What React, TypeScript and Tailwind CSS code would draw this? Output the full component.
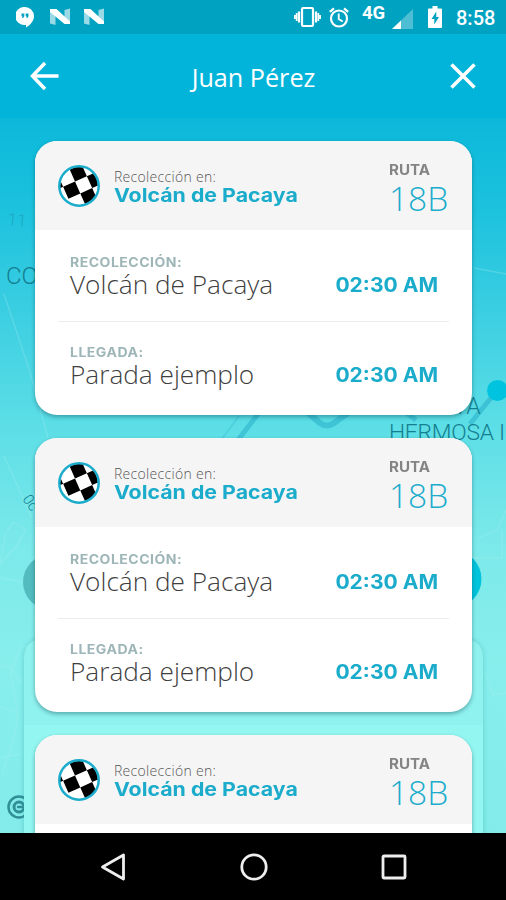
import React from 'react';

const STOPS = [
  { id: 1, place: 'Volcán de Pacaya', route: '18B' },
  { id: 2, place: 'Volcán de Pacaya', route: '18B' },
  { id: 3, place: 'Volcán de Pacaya', route: '18B' },
];

const NougatIcon = () => (
  <svg viewBox="0 0 22 18" className="h-[18px] w-[22px]">
    <path d="M1 2.5l5.5 4V17L1 15.5zM15.5 2l5.5-1.5v15l-5.5-4z" fill="#fff" opacity=".6" />
    <path d="M1 1h6.500L21 13.500V16h-5.500L1 4z" fill="#fff" />
  </svg>
);

const StatusBar = () => (
  <div className="flex h-[34px] shrink-0 items-center bg-[#00a2c1] pr-[11px] pl-[16px]">
    <svg viewBox="0 0 18 21" className="h-[21px] w-[18px]">
      <path d="M9 0a9 9 0 0 1 9 9c0 5.300-4 9-8 11.500V17.800A9 9 0 1 1 9 0z" fill="#fff" />
      <path d="M5.500 6.500h2.800v2.700L7.200 11h-.9V9.200h-.8zM9.700 6.500h2.800v2.700L11.400 11h-.9V9.200h-.8z" fill="#00a2c1" />
    </svg>
    <div className="ml-[15px] flex gap-[12px]">
      <NougatIcon />
      <NougatIcon />
    </div>
    <div className="ml-auto flex items-center">
      <svg viewBox="0 0 27 20" className="h-[20px] w-[27px]" fill="none" stroke="#fff" strokeWidth="2.200">
        <rect x="8" y="1" width="11" height="18" rx="1.500" />
        <path d="M5 4.500v11M22 4.500v11" />
        <path d="M2.700 6v8M24.300 6v8M.8 8v4M26.200 8v4" strokeWidth="1.800" />
      </svg>
      <svg viewBox="0 0 20 21" className="ml-[8px] h-[21px] w-[20px]" fill="none" stroke="#fff" strokeWidth="2.200">
        <circle cx="10" cy="11.500" r="8" />
        <path d="M9.700 6.500v5.500l4 2.500" strokeWidth="1.900" />
        <path d="M.8 4.800l4.200-3.500M19.200 4.800L15 1.300" />
      </svg>
      <span className="mb-[8px] ml-[13px] w-[24px] font-[Roboto] text-[18.5px] leading-[18px] font-bold text-white">4G</span>
      <svg viewBox="0 0 21 20" className="mt-[4px] ml-[6px] h-[20px] w-[21px]">
        <path d="M0 20L21 0v20z" fill="#fff" opacity=".3" />
        <path d="M0 20l9-8.600V20z" fill="#fff" />
      </svg>
      <svg viewBox="0 0 14 22" className="ml-[15px] h-[22px] w-[14px]">
        <path d="M4.500 0h5v2.500H13a1 1 0 0 1 1 1V21a1 1 0 0 1-1 1H1a1 1 0 0 1-1-1V3.500a1 1 0 0 1 1-1h3.500z" fill="#fff" />
        <path d="M8.300 5.500L3.500 13H6.300v5.500L11 11H8.300z" fill="#00a2c1" />
      </svg>
      <span className="ml-[14px] w-[39px] pt-[2px] font-[Roboto] text-[20px] leading-[24px] font-medium whitespace-nowrap text-white">8:58</span>
    </div>
  </div>
);

const TopBar = () => (
  <div className="flex h-[84px] shrink-0 items-center justify-between bg-[#03b4da] pr-[30px] pl-[30px]">
    <svg viewBox="0 0 30 30" className="h-[30px] w-[30px]" fill="none" stroke="#fff" strokeWidth="3.500">
      <path d="M28.500 15H3M15 2L2.500 15 15 28" />
    </svg>
    <h1 className="pt-[1px] pr-[3px] font-['Open_Sans'] text-[25.2px] leading-[34px] text-white">Juan Pérez</h1>
    <svg viewBox="0 0 26 26" className="h-[26px] w-[26px]" fill="none" stroke="#fff" strokeWidth="3.500">
      <path d="M1.500 1.500l23 23M24.500 1.500l-23 23" />
    </svg>
  </div>
);

/* Dimmed route map behind the list */
const MapBackdrop = () => (
  <svg viewBox="0 0 506 715" className="absolute inset-0 h-full w-full">
    <defs>
      <linearGradient id="sea" x1="0" y1="0" x2="0" y2="1">
        <stop offset="0" stopColor="#0cb8da" />
        <stop offset=".12" stopColor="#1bc1dd" />
        <stop offset=".28" stopColor="#3dcfe2" />
        <stop offset=".43" stopColor="#5cdee6" />
        <stop offset=".6" stopColor="#7ce9ea" />
        <stop offset=".75" stopColor="#87eeec" />
        <stop offset="1" stopColor="#83ecea" />
      </linearGradient>
      <filter id="lift" x="-10%" y="-10%" width="120%" height="120%">
        <feDropShadow dx="0" dy="0" stdDeviation="2.500" floodColor="#2a9a9a" floodOpacity=".4" />
      </filter>
    </defs>
    <rect width="506" height="715" fill="url(#sea)" />
    <g fill="none" stroke="#b5f5f2" strokeWidth="1.300" opacity=".25">
      <path d="M4 176l26 78 18 66M4 338l28 62M0 446l18-20 8-14-12-8-8 10zM0 460l22 4 12-26M34 526l-14 4-8 22 10 14M0 547l10 3 8 46-4 24-12 36M0 588l18 8M0 640l20-4" />
      <path d="M474 150l32 6M478 420l20-8 8-20M472 440h30M485 555l8 22 13-2M502 440v-30" />
    </g>
    <g fill="none" stroke="#159fbf" opacity=".4">
      <path d="M221 322l18-24" strokeWidth="2" opacity=".5" />
      <path d="M238 322l20-26" strokeWidth="5" />
      <path d="M308 295l12 10q7 5 14 0l14-10" strokeWidth="6" />
      <path d="M400 290l16 12M470 306l24-30" strokeWidth="5" />
    </g>
    <circle cx="497.500" cy="272.500" r="10.500" fill="#00c3df" />
    <g fill="#147f91" fontFamily="Roboto, sans-serif" fontWeight="300">
      <text x="7" y="107" fontSize="17" opacity=".4" transform="rotate(5 6 107)">11</text>
      <text x="6" y="166" fontSize="24">CO</text>
      <text x="453" y="296" fontSize="23">VA</text>
      <text x="389" y="322" fontSize="22.800" textLength="116">HERMOSA I</text>
      <text x="22" y="381" fontSize="15" transform="rotate(55 22 381)">0c</text>
    </g>
    <circle cx="51" cy="464" r="28" fill="#53bcbf" />
    <circle cx="453" cy="461" r="28.500" fill="#00c3dc" />
    <g fill="none" stroke="#318f96" strokeWidth="2.500">
      <circle cx="19" cy="689" r="10.500" />
      <circle cx="19" cy="689" r="5" strokeWidth="3" />
      <path d="M17 689h9" />
    </g>
    <path d="M24 730V541q0-20 20-20h419q20 0 20 20v189z" fill="#8ff2ee" filter="url(#lift)" />
    <path d="M24 607h459v120H24z" fill="#98f9f3" opacity=".55" />
  </svg>
);

const CheckerBadge = () => (
  <svg viewBox="0 0 42 42" className="h-[42px] w-[42px] shrink-0">
    <defs>
      <clipPath id="badge-clip">
        <circle cx="21" cy="21" r="19" />
      </clipPath>
    </defs>
    <circle cx="21" cy="21" r="19" fill="#fff" />
    <g clipPath="url(#badge-clip)">
      <g transform="translate(17 16.500) rotate(-24)">
        <path d="M-13 0H0v13h-13zM0-13h13V0H0zM0 13h13v13H0zM13 0h13v13H13zM-26-13h13V0h-13z" fill="#000" />
      </g>
    </g>
    <circle cx="21" cy="21" r="19.700" fill="none" stroke="#1baccc" strokeWidth="2.500" />
  </svg>
);

type LegProps = { label: string; value: string; time: string };

const Leg = ({ label, value, time }: LegProps) => (
  <div className="flex h-[91px] items-start justify-between pr-[11px] pl-[12px]">
    <div className="pt-[24px]">
      <p className="origin-left scale-x-[1.08] font-[Inter] text-[13px] leading-[16px] font-bold tracking-[0.45px] text-[#9eb6b8]">{label}</p>
      <p className="font-['Open_Sans'] text-[26.2px] leading-[29px] font-light whitespace-nowrap text-[#3f3f3f]">{value}</p>
    </div>
    <span className="origin-right scale-x-[1.08] pt-[43px] font-[Inter] text-[19.5px] leading-[24px] font-bold whitespace-nowrap text-[#1baccc]">{time}</span>
  </div>
);

const RouteCard = ({ place, route }: { place: string; route: string }) => (
  <div className="h-[274px] shrink-0 overflow-hidden rounded-[22px] bg-white shadow-[0_2px_4px_rgba(0,60,70,0.4)]">
    <div className="flex h-[89px] items-start bg-[#f5f5f5] pr-[24px] pl-[23px]">
      <div className="flex items-center pt-[24px]">
        <CheckerBadge />
        <div className="ml-[14px]">
          <p className="font-['Open_Sans'] text-[14px] leading-[18px] font-light tracking-[0.3px] text-[#555]">Recolección en:</p>
          <p className="origin-left scale-x-[1.135] font-[Inter] text-[18.8px] leading-[19px] font-bold whitespace-nowrap text-[#1baccc]">{place}</p>
        </div>
      </div>
      <div className="ml-auto w-[59px] pt-[20px]">
        <p className="origin-left scale-x-[1.08] font-[Inter] text-[14px] leading-[18px] font-bold text-[#848484]">RUTA</p>
        <p className="font-['Open_Sans'] text-[33.5px] leading-[39px] font-light text-[#1baccc]">{route}</p>
      </div>
    </div>
    <div className="px-[23px]">
      <Leg label="RECOLECCIÓN:" value={place} time="02:30 AM" />
      <div className="h-px bg-[#ececec]" />
      <div className="-mt-[2px]">
        <Leg label="LLEGADA:" value="Parada ejemplo" time="02:30 AM" />
      </div>
    </div>
  </div>
);

const NavBar = () => (
  <div className="flex h-[67px] shrink-0 items-center justify-between bg-black pr-[99px] pl-[100px]">
    <svg viewBox="0 0 26 28" className="h-[28px] w-[26px]" fill="none" stroke="#eee" strokeWidth="2.800">
      <path d="M2.500 14L23.500 2v24z" strokeLinejoin="round" />
    </svg>
    <svg viewBox="0 0 28 28" className="h-[28px] w-[28px]" fill="none" stroke="#eee" strokeWidth="2.800">
      <circle cx="14" cy="14" r="12.200" />
    </svg>
    <svg viewBox="0 0 26 26" className="h-[26px] w-[26px]" fill="none" stroke="#eee" strokeWidth="2.800">
      <rect x="2" y="2" width="22" height="22" rx="1" />
    </svg>
  </div>
);

export default function App() {
  return (
    <div className="flex h-[900px] w-[506px] flex-col overflow-hidden">
      <StatusBar />
      <TopBar />
      <main className="relative h-[715px] overflow-hidden">
        <MapBackdrop />
        <div className="relative flex flex-col gap-[23px] pt-[23px] pr-[34px] pl-[35px]">
          {STOPS.map((stop) => (
            <RouteCard key={stop.id} place={stop.place} route={stop.route} />
          ))}
        </div>
      </main>
      <NavBar />
    </div>
  );
}
